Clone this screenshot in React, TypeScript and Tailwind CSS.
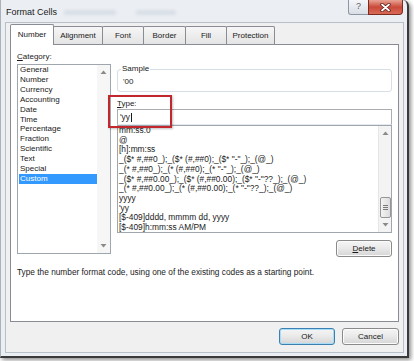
import React from 'react';

const categories = [
  'General',
  'Number',
  'Currency',
  'Accounting',
  'Date',
  'Time',
  'Percentage',
  'Fraction',
  'Scientific',
  'Text',
  'Special',
  'Custom',
];

const formats = [
  'mm:ss.0',
  '@',
  '[h]:mm:ss',
  '_($* #,##0_);_($* (#,##0);_($* "-"_);_(@_)',
  '_(* #,##0_);_(* (#,##0);_(* "-"_);_(@_)',
  '_($* #,##0.00_);_($* (#,##0.00);_($* "-"??_);_(@_)',
  '_(* #,##0.00_);_(* (#,##0.00);_(* "-"??_);_(@_)',
  'yyyy',
  "'yy",
  '[$-409]dddd, mmmm dd, yyyy',
  '[$-409]h:mm:ss AM/PM',
];

const tabs = [
  { label: 'Number', w: 'w-[44px]' },
  { label: 'Alignment', w: 'w-[50px]' },
  { label: 'Font', w: 'w-[42px]' },
  { label: 'Border', w: 'w-[43px]' },
  { label: 'Fill', w: 'w-[42px]' },
  { label: 'Protection', w: 'w-[49px]' },
];

const Arrow = ({ up }: { up?: boolean }) => (
  <svg width="7" height="4" viewBox="0 0 7 4">
    <path d={up ? 'M0.5 4L3.5 0.5L6.5 4Z' : 'M0.5 0L3.5 3.5L6.5 0Z'} fill="#8a8a8a" />
  </svg>
);

const WinButton = ({
  children,
  primary,
  className = '',
}: {
  children: React.ReactNode;
  primary?: boolean;
  className?: string;
}) => (
  <div
    className={`flex items-center justify-center rounded-[3px] border bg-linear-to-b from-[#f5f5f5] via-[#e9e9e9] to-[#d5d5d5] text-[8px] leading-[10px] text-[#1a1a1a] ${
      primary
        ? 'border-[#3c7fb1] shadow-[inset_0_0_0_1px_#a6dcf7]'
        : 'border-[#8a8a8a] shadow-[inset_0_0_0_1px_#fbfbfb]'
    } ${className}`}
  >
    {children}
  </div>
);

export default function App() {
  return (
    <div className="w-[414px] h-[361px] bg-white overflow-hidden font-['Liberation_Sans',Arial,sans-serif]">
      {/* Dialog window */}
      <div className="w-[409px] h-[358px] flex flex-col bg-[#ebeef2] border-l border-l-[#aab1ba] border-r-2 border-b-2 border-r-[#3a3a3a] border-b-[#3a3a3a] rounded-tr-[6px] shadow-[2px_2px_4px_rgba(0,0,0,0.45)]">
        {/* Title bar */}
        <div className="h-[22px] flex items-start">
          <span className="pl-[5px] pt-[6px] text-[9px] leading-[12px] text-[#1a1a1a]">Format Cells</span>
          <div className="ml-[7px] mt-[10px] h-[5px] w-[52px] rounded bg-[#d8dee7] blur-[1.5px]" />
          <div className="ml-[20px] mt-[10px] h-[5px] w-[40px] rounded bg-[#d8dee7] blur-[1.5px]" />
          <div className="ml-auto mr-[4px] flex">
            <div className="w-[21px] h-[15px] flex items-center justify-center border border-t-0 border-[#8d96a3] rounded-bl-[3px] bg-linear-to-b from-[#f4f6f9] to-[#d9dee6] text-[9px] text-[#5a6068]">
              ?
            </div>
            <div className="w-[35px] h-[15px] -ml-px flex items-center justify-center border border-t-0 border-[#7c2b22] rounded-br-[4px] bg-linear-to-b from-[#e7a395] via-[#c9493a] to-[#d86a55]">
              <svg width="11" height="9" viewBox="0 0 11 9">
                <path d="M2 1.5L9 7.5M9 1.5L2 7.5" stroke="#5a1c16" strokeWidth="3.4" strokeLinecap="round" />
                <path d="M2 1.5L9 7.5M9 1.5L2 7.5" stroke="#ffffff" strokeWidth="1.8" strokeLinecap="round" />
              </svg>
            </div>
          </div>
        </div>

        {/* Client area */}
        <div className="ml-[4px] mr-[3px] h-[331px] flex flex-col bg-[#f0f0f0] border border-[#b8c0ca] px-[4px] pt-[1px]">
          {/* Tabs */}
          <div className="h-[20px] flex items-end">
            {tabs.map((t, i) =>
              i === 0 ? (
                <div
                  key={t.label}
                  className={`${t.w} h-[21px] -mb-px relative z-10 flex items-center justify-center bg-white border border-b-0 border-[#898c95] rounded-t-[2px] text-[8px] text-[#1a1a1a]`}
                >
                  {t.label}
                </div>
              ) : (
                <div
                  key={t.label}
                  className={`${t.w} h-[18px] -ml-px flex items-center justify-center bg-linear-to-b from-[#f6f6f6] to-[#e4e4e4] border border-b-0 border-[#898c95] rounded-t-[2px] text-[8px] text-[#1a1a1a]`}
                >
                  {t.label}
                </div>
              )
            )}
          </div>

          {/* Tab panel */}
          <div className="h-[278px] bg-white border border-[#898c95] pl-[6px] pr-[5px] pt-[7px] flex flex-col text-[8px] text-[#1a1a1a]">
            <div className="flex gap-[6px]">
              {/* Category */}
              <div className="w-[94px] flex flex-col">
                <div className="leading-[10px]">
                  <span className="underline">C</span>ategory:
                </div>
                <div className="mt-[2px] h-[190px] flex border border-[#a0a6ae]">
                  <div className="flex-1 pl-px leading-[9.9px]">
                    {categories.map((c) => (
                      <div
                        key={c}
                        className={c === 'Custom' ? 'bg-[#3399ff] text-white pl-px' : 'pl-px'}
                      >
                        {c}
                      </div>
                    ))}
                  </div>
                  <div className="w-[13px] flex flex-col items-center justify-between py-[5px] bg-[#f6f6f6]">
                    <Arrow up />
                    <Arrow />
                  </div>
                </div>
              </div>

              {/* Right side */}
              <div className="w-[275px] flex flex-col relative">
                <div className="mt-[17px] h-[23px] relative border border-[#d5dfe5] rounded-[3px] pl-[5px] pt-[7px] leading-[10px]">
                  <span className="absolute -top-[6px] left-[3px] bg-white px-px leading-[10px]">Sample</span>
                  '00
                </div>

                <div className="mt-[7px] leading-[10px]">
                  <span className="underline">T</span>ype:
                </div>
                <div className="h-[16px] flex items-center border border-[#abadb3] border-b-[#e3e9ef] pl-[2px] leading-[10px] text-[8.4px]">
                  'yy
                  <span className="ml-px w-px h-[9px] bg-[#1a1a1a]" />
                </div>

                <div className="h-[108px] flex border border-[#a0a6ae]">
                  <div className="flex-1 pl-[1px] leading-[9.7px] text-[8.4px] whitespace-pre overflow-hidden">
                    {formats.map((f) => (
                      <div key={f}>{f}</div>
                    ))}
                  </div>
                  <div className="w-[13px] flex flex-col items-center py-[5px] bg-[#f3f3f3] border-l border-[#e6e6e6]">
                    <Arrow up />
                    <div className="mt-[62px] w-[11px] h-[21px] flex flex-col items-center justify-center gap-px rounded-[2px] border border-[#959595] bg-linear-to-r from-[#f3f3f3] to-[#dcdcdc]">
                      <div className="w-[5px] h-px bg-[#7a7a7a]" />
                      <div className="w-[5px] h-px bg-[#7a7a7a]" />
                      <div className="w-[5px] h-px bg-[#7a7a7a]" />
                    </div>
                    <div className="mt-auto">
                      <Arrow />
                    </div>
                  </div>
                </div>

                <WinButton className="mt-[7px] self-end w-[56px] h-[17px]">
                  <span className="underline">D</span>elete
                </WinButton>

                {/* highlight annotation */}
                <div className="absolute -left-[9px] top-[43px] w-[64px] h-[33px] border-2 border-[#c1272d] shadow-[1px_1px_2px_rgba(0,0,0,0.25)]" />
              </div>
            </div>

            <div className="mt-[10px] leading-[10px] text-[8.3px]">
              Type the number format code, using one of the existing codes as a starting point.
            </div>
          </div>

          {/* Dialog buttons */}
          <div className="mt-[6px] flex justify-end gap-[7px]">
            <WinButton primary className="w-[56px] h-[17px]">
              OK
            </WinButton>
            <WinButton className="w-[57px] h-[17px]">Cancel</WinButton>
          </div>
        </div>
      </div>
    </div>
  );
}
